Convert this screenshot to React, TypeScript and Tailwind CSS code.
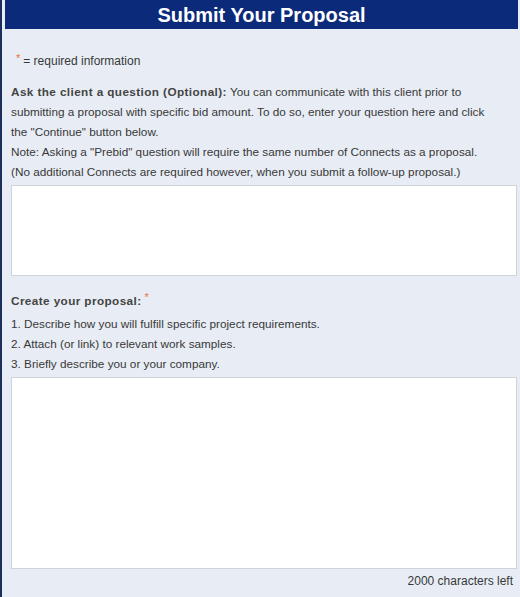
export default function App() {
  return (
    <div
      className="min-h-[597px] w-[520px] bg-[#e8edf5] border-l-2 border-[#1c2f5a] pl-[3px] pr-[2px] text-[11.75px] leading-[20px] text-[#383838]"
      style={{ fontFamily: '"Liberation Sans", Arial, sans-serif' }}
    >
      <div className="h-[29px] bg-[#0b2b7a] flex items-center justify-center">
        <h1 className="text-[20px] font-bold text-white leading-none">Submit Your Proposal</h1>
      </div>

      <div className="pl-[6px] pr-[1px]">
        <p className="mt-[22px] text-[12px] pl-[5px]">
          <span className="relative -top-[3px] text-[#e8703a] text-[11px] mr-[3px]">*</span>= required information
        </p>

        <div className="mt-[11px]">
          <div className="pr-[14px]">
            <p>
              <span className="font-bold text-[#444] tracking-[0.4px]">Ask the client a question (Optional):</span> You
              can communicate with this client prior to submitting a proposal with specific bid amount. To do so, enter
              your question here and click the "Continue" button below.
            </p>
            <p>Note: Asking a "Prebid" question will require the same number of Connects as a proposal.</p>
            <p>(No additional Connects are required however, when you submit a follow-up proposal.)</p>
          </div>
          <textarea className="mt-[3px] block w-full h-[91px] bg-white border border-[#cfd3da] resize-none outline-none" />
        </div>

        <div className="mt-[15px]">
          <p>
            <span className="font-bold text-[#444] tracking-[0.4px]">Create your proposal:</span>
            <span className="relative -top-[4px] text-[#e8703a] text-[11px] ml-[3px]">*</span>
          </p>
          <ol className="mt-[3px]">
            <li>1. Describe how you will fulfill specific project requirements.</li>
            <li>2. Attach (or link) to relevant work samples.</li>
            <li>3. Briefly describe you or your company.</li>
          </ol>
          <textarea className="mt-[3px] block w-full h-[192px] bg-white border border-[#cfd3da] resize-none outline-none" />
          <p className="mt-[2px] text-right pr-[4px] text-[12px]">2000 characters left</p>
        </div>
      </div>
    </div>
  );
}
